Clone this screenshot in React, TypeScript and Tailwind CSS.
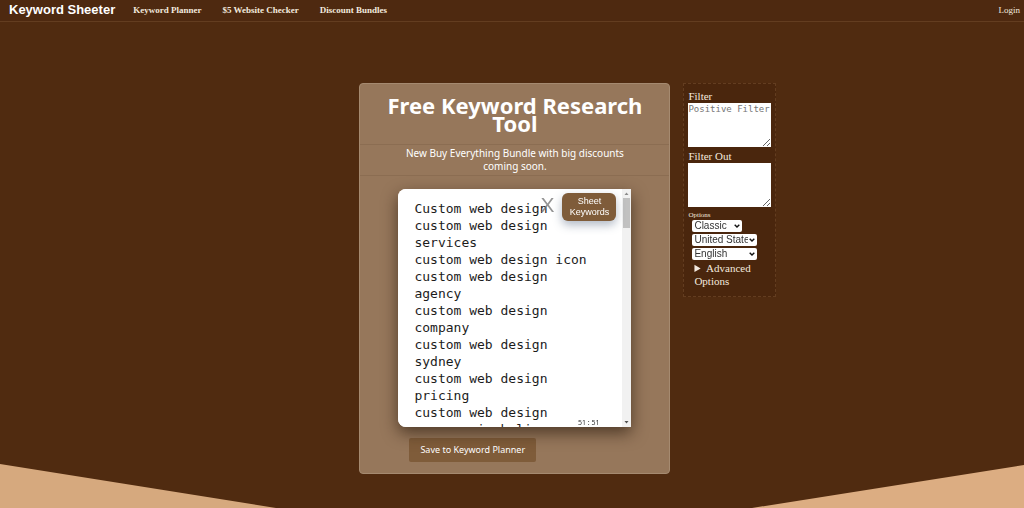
import { useState } from 'react';

const NAV_LINKS = ['Keyword Planner', '$5 Website Checker', 'Discount Bundles'];

const INITIAL_KEYWORDS = [
  'Custom web design',
  'custom web design services',
  'custom web design icon',
  'custom web design agency',
  'custom web design company',
  'custom web design sydney',
  'custom web design pricing',
  'custom web design company in bali',
].join('\n');

const filterClass =
  'block h-11 w-full resize border-0 bg-white p-0 text-[9px] leading-3 text-black placeholder:text-[#757575] font-["DejaVu_Sans_Mono",monospace]';

function Header() {
  return (
    <header className="flex h-[22px] items-center border-b border-[#633d20] bg-[#4e2910] pl-[9px] pr-1 pb-px text-white">
      <a href="#" className='text-[13px] leading-4 font-bold font-["Liberation_Sans",sans-serif]'>
        Keyword Sheeter
      </a>
      <nav className="ml-[18px] flex gap-[21px] text-[9px] leading-3 font-bold text-[#f3e9df]">
        {NAV_LINKS.map((label) => (
          <a key={label} href="#">
            {label}
          </a>
        ))}
      </nav>
      <a href="#" className="ml-auto text-[9px] leading-3 text-[#f3e9df]">
        Login
      </a>
    </header>
  );
}

// Always-visible scrollbar next to the keyword list
function ScrollTrack() {
  return (
    <div className="flex w-[9px] shrink-0 flex-col items-center bg-[#f1f1f1]" aria-hidden="true">
      <svg className="h-[9px] w-[9px]" viewBox="0 0 9 9">
        <path d="M2.5 6 4.5 3.5 6.5 6Z" fill="#8b8b8b" />
      </svg>
      <div className="h-[30px] w-[7px] bg-[#c1c1c1]" />
      <svg className="mt-auto h-[9px] w-[9px]" viewBox="0 0 9 9">
        <path d="M2.5 3 4.5 5.5 6.5 3Z" fill="#505050" />
      </svg>
    </div>
  );
}

function KeywordTool() {
  const [keywords, setKeywords] = useState(INITIAL_KEYWORDS);

  return (
    <section className='w-[311px] shrink-0 rounded-sm border border-[#a58a70] bg-[#96775b] pb-[11px] text-white font-["Noto_Sans",sans-serif]'>
      <h1 className="px-5 py-3 text-center text-[22px] leading-[18px] font-bold">
        Free Keyword Research Tool
      </h1>
      <p className="border-y border-[#8b6d52] px-10 py-0.5 text-center text-[10px] leading-[13px]">
        New Buy Everything Bundle with big discounts coming soon.
      </p>

      <div className="relative mx-[38px] mt-[13px] flex h-[238px] overflow-hidden rounded-l-lg bg-white shadow-[0_6px_16px_rgba(40,25,12,0.65)]">
        <textarea
          aria-label="Keywords"
          value={keywords}
          onChange={(e) => setKeywords(e.target.value)}
          className='block min-w-0 flex-1 resize-none border-0 bg-white pt-[11px] pr-6 pl-4 text-[13px] leading-[17px] text-[#1c1c1c] outline-none [scrollbar-width:none] font-["DejaVu_Sans_Mono",monospace]'
        />
        <ScrollTrack />
        <button
          type="button"
          aria-label="Clear keywords"
          onClick={() => setKeywords('')}
          className='absolute top-1 right-[77px] text-[21px] leading-6 text-[#707070]/75 font-["Liberation_Sans",sans-serif]'
        >
          X
        </button>
        <button
          type="button"
          className='absolute top-1 right-[15px] h-7 w-[54px] rounded-md bg-[#7f5c3a] text-[9px] leading-[11px] text-white shadow-[0_4px_10px_rgba(60,80,110,0.4)] font-["Liberation_Sans",sans-serif]'
        >
          Sheet Keywords
        </button>
        <span className="absolute right-8 bottom-0 text-[7px] leading-2 text-[#333]">51 : 51</span>
      </div>

      <button
        type="button"
        className="mt-[11px] ml-[49px] block h-6 rounded-xs bg-[#7f5c3a] px-[11px] text-[9px] leading-3 text-white"
      >
        Save to Keyword Planner
      </button>
    </section>
  );
}

function OptionSelect({ label, value, wide = false }: { label: string; value: string; wide?: boolean }) {
  return (
    <div className={wide ? 'relative w-[65px]' : 'relative w-[50px]'}>
      <select
        aria-label={label}
        className='block h-3 w-full appearance-none rounded-xs border-0 bg-white py-0 pr-[9px] pl-[2px] text-[10px] leading-3 text-[#333] font-["Liberation_Sans",sans-serif]'
      >
        <option>{value}</option>
      </select>
      <svg
        className="pointer-events-none absolute top-1 right-[2px] h-1 w-[6px]"
        viewBox="0 0 6 4"
        aria-hidden="true"
      >
        <path d="M0.7 0.7 3 3 5.3 0.7" fill="none" stroke="#111" strokeWidth="1.4" />
      </svg>
    </div>
  );
}

function FilterPanel() {
  return (
    <aside className="w-[93px] shrink-0 border border-dashed border-[#633d20] bg-[#4a260d] px-1 pt-1.5 pb-2 text-[11px] leading-[13px] text-[#f3e9df]">
      <label htmlFor="filter" className="block">
        Filter
      </label>
      <textarea id="filter" placeholder="Positive Filter" className={filterClass} />
      <label htmlFor="filter-out" className="mt-[3px] block">
        Filter Out
      </label>
      <textarea id="filter-out" className={filterClass} />

      <div className="mt-1 text-[7px] leading-[9px]">Options</div>
      <div className="ml-1 flex flex-col items-start gap-[2px]">
        <OptionSelect label="Mode" value="Classic" />
        <OptionSelect label="Country" value="United States" wide />
        <OptionSelect label="Language" value="English" wide />
        <details className="pl-[2px]">
          <summary className="cursor-pointer">Advanced Options</summary>
        </details>
      </div>
    </aside>
  );
}

export default function App() {
  return (
    <div className='relative min-h-screen overflow-hidden bg-[#502b10] font-["Liberation_Serif",serif]'>
      <svg
        className="absolute bottom-0 left-0 h-11 w-full"
        viewBox="0 0 1024 44"
        preserveAspectRatio="none"
        aria-hidden="true"
      >
        <path d="M0 0 276 44H0Z" fill="#d6a97e" />
        <path d="M1024 1 752 44H1024Z" fill="#dcad82" />
      </svg>
      <Header />
      <main className="relative flex items-start gap-[13px] pt-[61px] pl-[35.1%]">
        <KeywordTool />
        <FilterPanel />
      </main>
    </div>
  );
}
